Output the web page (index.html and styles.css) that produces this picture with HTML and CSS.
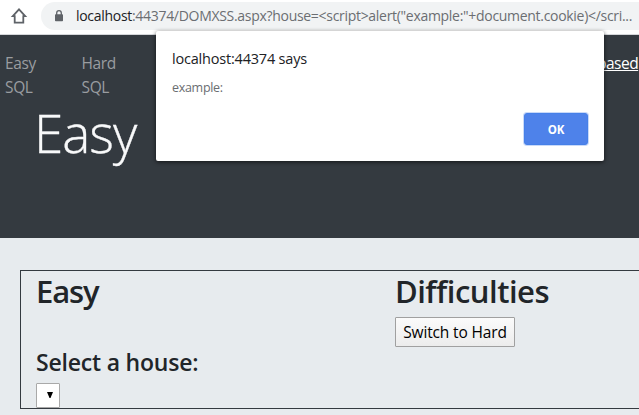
FILE: index.html
```html
<!DOCTYPE html>
<html lang="en">
<head>
<meta charset="utf-8">
<title>Easy</title>
<link rel="stylesheet" href="styles.css">
</head>
<body>
<header class="toolbar">
  <svg class="home" viewBox="0 0 18 18" width="18" height="18"><path d="M2.8 9.1 9 2.3l6.2 6.8h-1.9v6.6H4.7V9.1z" fill="none" stroke="#5f6368" stroke-width="1.8"/></svg>
  <div class="address">
    <svg class="lock" viewBox="0 0 10 12" width="10" height="12"><path d="M2.7 5V3a2.3 2.3 0 0 1 4.6 0v2" fill="none" stroke="#5f6368" stroke-width="1.3"/><rect x="1" y="4.3" width="8" height="7" rx=".8" fill="#5f6368"/></svg>
    <span class="url"><span class="host">localhost</span>:44374/DOMXSS.aspx?house=&lt;script&gt;alert("example:"+document.cookie)&lt;/scri...</span>
  </div>
</header>
<section class="hero">
  <nav class="nav">
    <a class="nav-link">Easy<br>SQL</a>
    <a class="nav-link">Hard<br>SQL</a>
    <a class="nav-link active">based</a>
  </nav>
  <h1 class="title">Easy</h1>
</section>
<main class="content">
  <div class="panel">
    <section class="column">
      <h2 class="heading easy">Easy</h2>
      <h3 class="subheading">Select a house:</h3>
      <div class="select"><svg width="6" height="6" viewBox="0 0 6 6"><path d="M0 0h6L3.5 6h-1z"/></svg></div>
    </section>
    <section class="column">
      <h2 class="heading difficulties">Difficulties</h2>
      <button class="switch">Switch to Hard</button>
    </section>
  </div>
</main>
<div class="dialog" role="dialog">
  <p class="origin">localhost:44374 says</p>
  <p class="message">example:</p>
  <button class="ok">OK</button>
</div>
</body>
</html>
```
FILE: styles.css
```css
* { box-sizing: border-box; }
body {
  margin: 0;
  width: 639px;
  height: 415px;
  overflow: hidden;
  position: relative;
  background: #e7ebee;
  color: #212529;
  font-family: "Open Sans", "Noto Sans", sans-serif;
}
h1, h2, h3, p { margin: 0; white-space: nowrap; }
.toolbar {
  display: flex;
  height: 35px;
  padding: 2px 0 4px 10px;
  background: #fff;
  border-bottom: 1px solid #d5d7da;
}
.home { margin-top: 5px; flex: none; }
.address {
  display: flex;
  flex: 1;
  min-width: 0;
  height: 28px;
  margin-left: 13px;
  padding-left: 13px;
  border-radius: 14px 0 0 14px;
  background: #f1f3f4;
}
.lock { margin-top: 8px; flex: none; }
.url {
  margin-left: 12px;
  font-size: 14px;
  line-height: 28px;
  letter-spacing: -.3px;
  white-space: nowrap;
  color: #6b6e72;
}
.host { color: #202124; letter-spacing: -.3px; }
.hero { height: 203px; background: #343a40; }
.nav { display: flex; height: 68px; padding: 16px 0 0 5px; }
.nav-link {
  width: 76.5px;
  flex: none;
  font-size: 15.5px;
  line-height: 24px;
  letter-spacing: -.35px;
  color: #9a9da0;
}
.nav-link.active { width: auto; margin-left: 439px; letter-spacing: -.5px; color: #fff; text-decoration: underline; }
.title {
  padding-left: 34px;
  font-size: 53px;
  line-height: 60px;
  font-weight: 300;
  letter-spacing: -1px;
  color: #f8f9fa;
  -webkit-text-stroke: .3px #f8f9fa;
}
.content { padding: 32px 0 0 20px; }
.panel {
  display: flex;
  height: 139px;
  padding-left: 15px;
  border: 1px solid #343a40;
  border-right: 0;
}
.column { width: 359px; flex: none; }
.column + .column { width: 244px; }
.heading { height: 46px; font-size: 31px; line-height: 41px; font-weight: 600; letter-spacing: -.5px; }
.easy { letter-spacing: -1.1px; }
.subheading { margin-top: 31px; font-size: 23px; line-height: 29px; font-weight: 600; letter-spacing: -.2px; }
.select {
  display: flex;
  align-items: center;
  justify-content: flex-end;
  width: 24px;
  height: 25px;
  margin-top: 6px;
  padding: 0 6px 1px 0;
  background: #fff;
  border: 1px solid #a9a9a9;
  border-radius: 1px;
}
.switch {
  display: block;
  width: 120px;
  height: 30px;
  padding: 0;
  border: 1px solid #a0a0a0;
  border-radius: 1px;
  background: linear-gradient(#fbfbfb, #ececec);
  font: 15.5px/26px "Open Sans", sans-serif;
  letter-spacing: -.15px;
  white-space: nowrap;
  color: #000;
}
.dialog {
  position: absolute;
  left: 156px;
  top: 31px;
  width: 448px;
  height: 130px;
  padding: 18px 16px;
  background: #fff;
  border-radius: 2px;
  box-shadow: 0 1px 4px rgba(0, 0, 0, .65);
}
.origin { font-size: 14.5px; line-height: 20px; letter-spacing: -.2px; color: #202124; }
.message { margin-top: 9px; font-size: 12.5px; line-height: 20px; letter-spacing: -.3px; color: #6a6d71; }
.ok {
  display: block;
  width: 64px;
  height: 32px;
  margin: 15px 0 0 auto;
  padding: 0;
  border: 1px solid #4680e8;
  border-radius: 3px;
  background: #4e82ea;
  box-shadow: 0 0 0 1px #c9d9f9;
  font: 700 11.5px/29px "Open Sans", sans-serif;
  letter-spacing: -.2px;
  color: #fff;
}
```
